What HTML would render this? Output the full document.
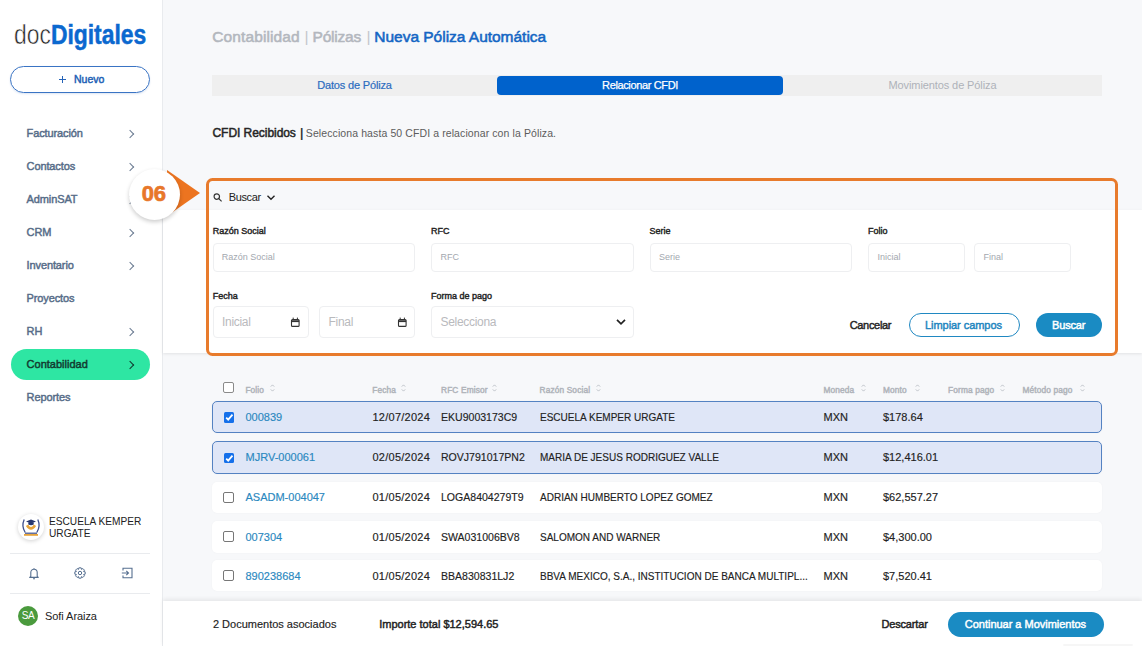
<!DOCTYPE html>
<html><head><meta charset="utf-8">
<style>
*{box-sizing:border-box;margin:0;padding:0}
html,body{width:1142px;height:646px;overflow:hidden;background:#f7f8fa;font-family:"Liberation Sans",sans-serif;color:#222}
.a{position:absolute;white-space:nowrap}
#side{position:absolute;left:0;top:0;width:163px;height:646px;background:#fff;border-right:1px solid #e9ebee}
.nav{position:absolute;left:26.6px;font-size:11px;font-weight:normal;-webkit-text-stroke:0.45px currentColor;color:#566c88;line-height:11px;letter-spacing:-0.12px;white-space:nowrap}
.chev{position:absolute;left:127px;width:6px;height:6px;border-right:1.2px solid #6a7b92;border-top:1.2px solid #6a7b92;transform:rotate(45deg)}
.lbl{position:absolute;font-size:9px;font-weight:normal;-webkit-text-stroke:0.4px currentColor;color:#222;line-height:9px;letter-spacing:0px;white-space:nowrap}
.inp{position:absolute;background:#fff;border:1px solid #eeeff1;border-radius:4px}
.ph{position:absolute;font-size:9px;color:#a3a8af;line-height:9px;white-space:nowrap}
.ph2{position:absolute;font-size:12px;color:#b9babd;line-height:12px;white-space:nowrap;letter-spacing:-0.3px}
.th{position:absolute;top:385.8px;font-size:8.3px;font-weight:normal;-webkit-text-stroke:0.45px currentColor;color:#b0b4ba;line-height:8.3px;white-space:nowrap;letter-spacing:0.15px}
.sort{position:absolute;top:384px;width:5px;height:8px}
.row{position:absolute;left:212px;width:890px;height:32px;background:#fff;border-radius:5px;box-shadow:0 0 2px rgba(0,0,0,0.04)}
.row.sel{background:#dfe6f7;border:1px solid #5482c2}
.td{position:absolute;font-size:11px;color:#222;line-height:11px;white-space:nowrap;-webkit-text-stroke:0.15px currentColor}
.fol{color:#2a88c0}
.rs{transform:scaleX(0.91);transform-origin:0 0}
.rfc{transform:scaleX(0.958);transform-origin:0 0}
.cb{position:absolute;left:223px;width:11px;height:11px;border:1.2px solid #777;border-radius:2px;background:#fff}
.cb.on{background:#1570ea;border:none;left:224px;width:10.3px;height:10.8px;border-radius:1.5px}
.btxt{font-size:11px;font-weight:normal;-webkit-text-stroke:0.45px currentColor;line-height:11px;white-space:nowrap}
</style></head><body>
<div id="side">
  <div class="a" style="left:14px;top:20.5px;font-size:28px;line-height:28px;transform:scaleX(0.817);transform-origin:0 0"><span style="color:#222;font-weight:normal;-webkit-text-stroke:0.6px #fff">doc</span><span style="color:#0b68cf;font-weight:bold;-webkit-text-stroke:0.5px #0b68cf">Digitales</span></div>
  <div class="a" style="left:10px;top:66px;width:140px;height:27px;border:1px solid #3a74c4;border-radius:14px;box-shadow:0 1px 2px rgba(30,90,180,0.15)"></div>
  <div class="a" style="left:59px;top:78.6px;width:7px;height:1.3px;background:#2563b8"></div>
  <div class="a" style="left:61.8px;top:75.6px;width:1.3px;height:7px;background:#2563b8"></div>
  <div class="a btxt" style="left:74px;top:74.1px;font-size:10.5px;line-height:10px;color:#1c5fb5;letter-spacing:0px">Nuevo</div>

  <div class="nav" style="top:127.5px">Facturación</div><div class="chev" style="top:131px"></div>
  <div class="nav" style="top:160.5px">Contactos</div><div class="chev" style="top:164px"></div>
  <div class="nav" style="top:193.5px">AdminSAT</div><div class="chev" style="top:197px"></div>
  <div class="nav" style="top:226.5px">CRM</div><div class="chev" style="top:230px"></div>
  <div class="nav" style="top:259.5px">Inventario</div><div class="chev" style="top:263px"></div>
  <div class="nav" style="top:292.5px">Proyectos</div>
  <div class="nav" style="top:325.5px">RH</div><div class="chev" style="top:329px"></div>
  <div class="a" style="left:10.5px;top:348.5px;width:139px;height:31.5px;border-radius:16px;background:#2ee6a3"></div>
  <div class="nav" style="top:358.5px;color:#123a30;letter-spacing:0px">Contabilidad</div><div class="chev" style="top:362px;border-color:#123a30"></div>
  <div class="nav" style="top:391.5px">Reportes</div>

  <!-- org logo -->
  <div class="a" style="left:18px;top:514px;width:26px;height:26px;border-radius:13px;background:#fff;box-shadow:0 1px 4px rgba(0,0,0,0.18)"></div>
  <svg class="a" style="left:18px;top:514px" width="26" height="26" viewBox="0 0 26 26">
    <path d="M6.2 5.5 Q3.2 12 7.2 18.5" fill="none" stroke="#3d4f8c" stroke-width="1.3"/>
    <path d="M19.8 5.5 Q22.8 12 18.8 18.5" fill="none" stroke="#3d4f8c" stroke-width="1.3"/>
    <path d="M9 11.2 Q13 17.5 17 11.2" fill="none" stroke="#e6a43c" stroke-width="2.6"/>
    <path d="M8 7.6 L13 5.6 L18 7.6 L13 9.6 Z" fill="#26366f"/>
    <path d="M10.3 8.4 V10.6 Q13 12 15.7 10.6 V8.4 Z" fill="#26366f"/>
    <rect x="7" y="18.6" width="12" height="1.2" fill="#3d4f8c"/>
    <rect x="6" y="20" width="14" height="1.8" fill="#e6a43c"/>
  </svg>
  <div class="a" style="left:49.3px;top:514.5px;font-size:10.5px;line-height:12.8px;color:#222;transform:scaleX(0.965);transform-origin:0 0">ESCUELA KEMPER<br>URGATE</div>
  <div class="a" style="left:10px;top:553px;width:140px;height:1px;background:#e9ebee"></div>
  <!-- bell -->
  <svg class="a" style="left:28px;top:566.5px" width="12" height="13" viewBox="0 0 12 13" fill="none" stroke="#566f90" stroke-width="1.1">
    <path d="M2.8 9.3 V5.6 A3.2 3.4 0 0 1 9.2 5.6 V9.3 L10.3 10.4 H1.7 Z" stroke-linejoin="round"/>
    <path d="M6 1.2 V2" />
    <path d="M5 11.8 H7"/>
  </svg>
  <!-- gear -->
  <svg class="a" style="left:74px;top:566.5px" width="12" height="12" viewBox="0 0 12 12" fill="none" stroke="#566f90" stroke-width="1">
    <path d="M11.17 4.84 L11.17 7.16 L9.59 7.52 L9.61 7.47 L10.48 8.84 L8.84 10.48 L7.47 9.61 L7.52 9.59 L7.16 11.17 L4.84 11.17 L4.48 9.59 L4.53 9.61 L3.16 10.48 L1.52 8.84 L2.39 7.47 L2.41 7.52 L0.83 7.16 L0.83 4.84 L2.41 4.48 L2.39 4.53 L1.52 3.16 L3.16 1.52 L4.53 2.39 L4.48 2.41 L4.84 0.83 L7.16 0.83 L7.52 2.41 L7.47 2.39 L8.84 1.52 L10.48 3.16 L9.61 4.53 L9.59 4.48 Z" stroke-linejoin="round"/>
    <circle cx="6" cy="6" r="1.7"/>
  </svg>
  <!-- logout -->
  <svg class="a" style="left:121px;top:567px" width="12" height="12" viewBox="0 0 12 12" fill="none" stroke="#566f90" stroke-width="1.1">
    <path d="M2 3.5 V1.2 H11 V10.8 H2 V8.5"/>
    <path d="M0.8 6 H7.5 M5.3 3.8 L7.5 6 L5.3 8.2"/>
  </svg>
  <div class="a" style="left:10px;top:593px;width:140px;height:1px;background:#e9ebee"></div>
  <div class="a" style="left:18px;top:605.5px;width:20px;height:20px;border-radius:10px;background:#4a9a3d;color:#fff;font-size:10px;text-align:center;line-height:20px;letter-spacing:-0.3px">SA</div>
  <div class="a" style="left:45px;top:611.4px;font-size:11px;line-height:11px;color:#222;letter-spacing:-0.06px">Sofi Araiza</div>
</div>

<!-- header -->
<div class="a" style="left:212.3px;top:28.7px;font-size:15.5px;font-weight:normal;-webkit-text-stroke:0.55px currentColor;line-height:16px;letter-spacing:0.1px;color:#b3b7be">Contabilidad</div>
<div class="a" style="left:304.6px;top:28.7px;font-size:15.5px;line-height:16px;color:#c3c6cc">|</div>
<div class="a" style="left:312.5px;top:28.7px;font-size:15.5px;font-weight:normal;-webkit-text-stroke:0.55px currentColor;line-height:16px;letter-spacing:-0.2px;color:#b3b7be">Pólizas</div>
<div class="a" style="left:366.6px;top:28.7px;font-size:15.5px;line-height:16px;color:#c3c6cc">|</div>
<div class="a" style="left:374.3px;top:28.7px;font-size:15.5px;font-weight:normal;-webkit-text-stroke:0.55px currentColor;line-height:16px;letter-spacing:-0.02px;color:#1466c4">Nueva Póliza Automática</div>

<div class="a" style="left:212px;top:75px;width:890px;height:21px;background:#efefef"></div>
<div class="a" style="left:497px;top:76px;width:286px;height:19px;background:#0062cc;border-radius:4px"></div>
<div class="a" style="left:212px;top:79.5px;width:285px;text-align:center;font-size:11px;line-height:11px;letter-spacing:-0.16px;color:#2b6cbf;-webkit-text-stroke:0.2px #2b6cbf">Datos de Póliza</div>
<div class="a" style="left:497px;top:79.5px;width:286px;text-align:center;font-size:11px;line-height:11px;letter-spacing:-0.36px;color:#fff;-webkit-text-stroke:0.25px #fff">Relacionar CFDI</div>
<div class="a" style="left:783px;top:79.5px;width:319px;text-align:center;font-size:11px;line-height:11px;letter-spacing:-0.1px;color:#aeb2b9">Movimientos de Póliza</div>

<div class="a" style="left:212.5px;top:127.2px;font-size:12px;line-height:12px;font-weight:normal;-webkit-text-stroke:0.5px currentColor;color:#262626;letter-spacing:-0.05px">CFDI Recibidos</div>
<div class="a" style="left:300px;top:127.2px;font-size:12px;line-height:12px;font-weight:bold;color:#333">|</div>
<div class="a" style="left:305.8px;top:128.4px;font-size:10.5px;line-height:10.5px;color:#5c5c5c;letter-spacing:0.1px">Selecciona hasta 50 CFDI a relacionar con la Póliza.</div>

<!-- white filter panel -->
<div class="a" style="left:163px;top:210px;width:979px;height:143px;background:#fff;box-shadow:0 1px 3px rgba(0,0,0,0.09)"></div>

<!-- search header -->
<svg class="a" style="left:213px;top:193px" width="10" height="9" viewBox="0 0 10 9" fill="none" stroke="#333" stroke-width="1.2">
  <circle cx="3.8" cy="3.6" r="2.7"/><path d="M5.8 5.6 L8.6 8.4"/>
</svg>
<div class="a" style="left:228.7px;top:192.4px;font-size:11px;line-height:11px;color:#222;letter-spacing:-0.35px">Buscar</div>
<svg class="a" style="left:266px;top:194px" width="10" height="7" viewBox="0 0 10 7" fill="none" stroke="#222" stroke-width="1.4">
  <path d="M1.5 1.8 L5 5.2 L8.5 1.8"/>
</svg>

<!-- row 1 labels -->
<div class="lbl" style="left:212.8px;top:227.1px">Razón Social</div>
<div class="lbl" style="left:431px;top:227.1px">RFC</div>
<div class="lbl" style="left:649.5px;top:227.1px">Serie</div>
<div class="lbl" style="left:868px;top:227.1px">Folio</div>
<div class="inp" style="left:212.5px;top:243px;width:202.5px;height:28.5px"></div>
<div class="inp" style="left:431px;top:243px;width:202.7px;height:28.5px"></div>
<div class="inp" style="left:649.5px;top:243px;width:202.5px;height:28.5px"></div>
<div class="inp" style="left:868px;top:243px;width:96.5px;height:28.5px"></div>
<div class="inp" style="left:974.3px;top:243px;width:96.3px;height:28.5px"></div>
<div class="ph" style="left:221.8px;top:252.6px">Razón Social</div>
<div class="ph" style="left:440.5px;top:252.6px">RFC</div>
<div class="ph" style="left:659px;top:252.6px">Serie</div>
<div class="ph" style="left:877.5px;top:252.6px">Inicial</div>
<div class="ph" style="left:983.5px;top:252.6px">Final</div>

<!-- row 2 -->
<div class="lbl" style="left:212.8px;top:291.6px">Fecha</div>
<div class="lbl" style="left:431px;top:291.6px">Forma de pago</div>
<div class="inp" style="left:212.5px;top:306px;width:96.5px;height:31.5px"></div>
<div class="inp" style="left:319.4px;top:306px;width:95.6px;height:31.5px"></div>
<div class="inp" style="left:431px;top:306px;width:202.7px;height:31.5px"></div>
<div class="ph2" style="left:222px;top:316.4px">Inicial</div>
<div class="ph2" style="left:328.5px;top:316.4px">Final</div>
<div class="ph2" style="left:440.5px;top:316.4px">Selecciona</div>
<svg class="a" style="left:290px;top:317px" width="10" height="10" viewBox="0 0 10 10" fill="none" stroke="#333" stroke-width="1.1">
  <rect x="1.5" y="2.6" width="7.6" height="6.8" rx="1"/><path d="M1.5 4.2 H9.1" stroke-width="1.8"/><path d="M3.2 0.6 V2.4 M7.4 0.6 V2.4" stroke-width="1"/>
</svg>
<svg class="a" style="left:397px;top:317px" width="10" height="10" viewBox="0 0 10 10" fill="none" stroke="#333" stroke-width="1.1">
  <rect x="1.5" y="2.6" width="7.6" height="6.8" rx="1"/><path d="M1.5 4.2 H9.1" stroke-width="1.8"/><path d="M3.2 0.6 V2.4 M7.4 0.6 V2.4" stroke-width="1"/>
</svg>
<svg class="a" style="left:614.8px;top:317px" width="12" height="10" viewBox="0 0 12 10" fill="none" stroke="#222" stroke-width="1.7">
  <path d="M2 2.8 L6 6.8 L10 2.8"/>
</svg>

<!-- buttons -->
<div class="a btxt" style="left:849.7px;top:319.7px;color:#262626;letter-spacing:-0.32px">Cancelar</div>
<div class="a" style="left:909px;top:312.6px;width:110.6px;height:24.8px;border:1px solid #2088c2;border-radius:13px"></div>
<div class="a btxt" style="left:925px;top:319.7px;color:#1f86c0;letter-spacing:-0.05px">Limpiar campos</div>
<div class="a" style="left:1035.5px;top:312.6px;width:66.5px;height:24.8px;background:#1a8bc3;border-radius:13px"></div>
<div class="a btxt" style="left:1052px;top:319.7px;color:#fff;letter-spacing:-0.15px">Buscar</div>

<!-- orange highlight -->
<div class="a" style="left:206px;top:178px;width:911.8px;height:177.6px;border:3px solid #e87b2c;border-radius:6.5px"></div>

<!-- 06 badge -->
<svg class="a" style="left:120px;top:160px" width="90" height="70" viewBox="0 0 90 70">
  <path d="M47 10 L80 33 L47 56 Z" fill="#ec7420"/>
</svg>
<div class="a" style="left:129px;top:168.5px;width:51px;height:51px;border-radius:26px;background:#fff;box-shadow:0px 2px 4px rgba(0,0,0,0.2)"></div>
<div class="a" style="left:141.8px;top:182.8px;font-size:22px;line-height:22px;font-weight:bold;color:#e8772a;letter-spacing:-0.3px;-webkit-text-stroke:0.7px #e8772a">06</div>

<!-- table header -->
<div class="cb" style="top:382.2px;width:10.8px;height:10.8px;border-color:#8a8a8a"></div>
<div class="th" style="left:245.4px">Folio</div>
<div class="th" style="left:372.3px">Fecha</div>
<div class="th" style="left:441px">RFC Emisor</div>
<div class="th" style="left:539.5px">Razón Social</div>
<div class="th" style="left:823.4px">Moneda</div>
<div class="th" style="left:883px">Monto</div>
<div class="th" style="left:948px">Forma pago</div>
<div class="th" style="left:1022.5px">Método pago</div>

<svg class="a" style="left:270.4px;top:383.8px" width="5" height="8" viewBox="0 0 5 8" fill="none" stroke="#b8bcc2" stroke-width="0.9"><path d="M0.8 2.6 L2.5 0.9 L4.2 2.6 M0.8 5.4 L2.5 7.1 L4.2 5.4"/></svg>
<svg class="a" style="left:401.4px;top:383.8px" width="5" height="8" viewBox="0 0 5 8" fill="none" stroke="#b8bcc2" stroke-width="0.9"><path d="M0.8 2.6 L2.5 0.9 L4.2 2.6 M0.8 5.4 L2.5 7.1 L4.2 5.4"/></svg>
<svg class="a" style="left:492.1px;top:383.8px" width="5" height="8" viewBox="0 0 5 8" fill="none" stroke="#b8bcc2" stroke-width="0.9"><path d="M0.8 2.6 L2.5 0.9 L4.2 2.6 M0.8 5.4 L2.5 7.1 L4.2 5.4"/></svg>
<svg class="a" style="left:595.6px;top:383.8px" width="5" height="8" viewBox="0 0 5 8" fill="none" stroke="#b8bcc2" stroke-width="0.9"><path d="M0.8 2.6 L2.5 0.9 L4.2 2.6 M0.8 5.4 L2.5 7.1 L4.2 5.4"/></svg>
<svg class="a" style="left:861.3px;top:383.8px" width="5" height="8" viewBox="0 0 5 8" fill="none" stroke="#b8bcc2" stroke-width="0.9"><path d="M0.8 2.6 L2.5 0.9 L4.2 2.6 M0.8 5.4 L2.5 7.1 L4.2 5.4"/></svg>
<svg class="a" style="left:915.2px;top:383.8px" width="5" height="8" viewBox="0 0 5 8" fill="none" stroke="#b8bcc2" stroke-width="0.9"><path d="M0.8 2.6 L2.5 0.9 L4.2 2.6 M0.8 5.4 L2.5 7.1 L4.2 5.4"/></svg>
<svg class="a" style="left:1000.4px;top:383.8px" width="5" height="8" viewBox="0 0 5 8" fill="none" stroke="#b8bcc2" stroke-width="0.9"><path d="M0.8 2.6 L2.5 0.9 L4.2 2.6 M0.8 5.4 L2.5 7.1 L4.2 5.4"/></svg>
<svg class="a" style="left:1080.0px;top:383.8px" width="5" height="8" viewBox="0 0 5 8" fill="none" stroke="#b8bcc2" stroke-width="0.9"><path d="M0.8 2.6 L2.5 0.9 L4.2 2.6 M0.8 5.4 L2.5 7.1 L4.2 5.4"/></svg>
<!-- table rows -->
<div class="row sel" style="top:401px;height:32.4px"></div>
<div class="cb on" style="top:412px"></div><svg class="a" style="left:224px;top:412px" width="11" height="11" viewBox="0 0 11 11"><path d="M2.2 5.6 L4.2 7.6 L8.5 2.6" fill="none" stroke="#fff" stroke-width="1.8"/></svg>
<div class="td fol" style="left:245.5px;top:411.7px">000839</div>
<div class="td" style="left:372.5px;top:411.7px;letter-spacing:0.25px">12/07/2024</div>
<div class="td rfc" style="left:441px;top:411.7px">EKU9003173C9</div>
<div class="td rs" style="left:539.5px;top:411.7px">ESCUELA KEMPER URGATE</div>
<div class="td mxn" style="left:823.5px;top:411.7px">MXN</div>
<div class="td" style="left:883px;top:411.7px">$178.64</div>
<div class="row sel" style="top:441px;height:32.5px"></div>
<div class="cb on" style="top:452.5px"></div><svg class="a" style="left:224px;top:452.5px" width="11" height="11" viewBox="0 0 11 11"><path d="M2.2 5.6 L4.2 7.6 L8.5 2.6" fill="none" stroke="#fff" stroke-width="1.8"/></svg>
<div class="td fol" style="left:245.5px;top:452.2px">MJRV-000061</div>
<div class="td" style="left:372.5px;top:452.2px;letter-spacing:0.25px">02/05/2024</div>
<div class="td rfc" style="left:441px;top:452.2px">ROVJ791017PN2</div>
<div class="td rs" style="left:539.5px;top:452.2px">MARIA DE JESUS RODRIGUEZ VALLE</div>
<div class="td mxn" style="left:823.5px;top:452.2px">MXN</div>
<div class="td" style="left:883px;top:452.2px">$12,416.01</div>
<div class="row" style="top:481.7px;height:31.5px"></div>
<div class="cb" style="top:491.9px"></div>
<div class="td fol" style="left:245.5px;top:492.2px">ASADM-004047</div>
<div class="td" style="left:372.5px;top:492.2px;letter-spacing:0.25px">01/05/2024</div>
<div class="td rfc" style="left:441px;top:492.2px">LOGA8404279T9</div>
<div class="td rs" style="left:539.5px;top:492.2px">ADRIAN HUMBERTO LOPEZ GOMEZ</div>
<div class="td mxn" style="left:823.5px;top:492.2px">MXN</div>
<div class="td" style="left:883px;top:492.2px">$62,557.27</div>
<div class="row" style="top:521.1px;height:31.5px"></div>
<div class="cb" style="top:531.2px"></div>
<div class="td fol" style="left:245.5px;top:531.7px">007304</div>
<div class="td" style="left:372.5px;top:531.7px;letter-spacing:0.25px">01/05/2024</div>
<div class="td rfc" style="left:441px;top:531.7px">SWA031006BV8</div>
<div class="td rs" style="left:539.5px;top:531.7px">SALOMON AND WARNER</div>
<div class="td mxn" style="left:823.5px;top:531.7px">MXN</div>
<div class="td" style="left:883px;top:531.7px">$4,300.00</div>
<div class="row" style="top:559.5px;height:31.5px"></div>
<div class="cb" style="top:569.9px"></div>
<div class="td fol" style="left:245.5px;top:571.2px">890238684</div>
<div class="td" style="left:372.5px;top:571.2px;letter-spacing:0.25px">01/05/2024</div>
<div class="td rfc" style="left:441px;top:571.2px">BBA830831LJ2</div>
<div class="td rs" style="left:539.5px;top:571.2px">BBVA MEXICO, S.A., INSTITUCION DE BANCA MULTIPL...</div>
<div class="td mxn" style="left:823.5px;top:571.2px">MXN</div>
<div class="td" style="left:883px;top:571.2px">$7,520.41</div>
<!-- footer -->
<div class="a" style="left:163px;top:600.5px;width:979px;height:46px;background:#fff;box-shadow:0 -2px 4px rgba(0,0,0,0.07)"></div>
<div class="a td" style="left:212.9px;top:618.5px">2 Documentos asociados</div>
<div class="a td" style="left:379.2px;top:618.5px;font-weight:normal;-webkit-text-stroke:0.45px currentColor;letter-spacing:0px">Importe total $12,594.65</div>
<div class="a td" style="left:881.4px;top:618.5px;font-weight:normal;-webkit-text-stroke:0.45px currentColor;letter-spacing:-0.15px">Descartar</div>
<div class="a" style="left:948px;top:611.5px;width:156px;height:25px;background:#1a8bc3;border-radius:13px"></div>
<div class="a td" style="left:964.8px;top:618.5px;font-weight:normal;-webkit-text-stroke:0.45px currentColor;color:#fff;letter-spacing:-0.02px">Continuar a Movimientos</div>

<div class="a" style="left:1063px;top:644px;width:70px;height:2px;background:rgba(0,0,0,0.035);border-radius:1px"></div>
</body></html>
